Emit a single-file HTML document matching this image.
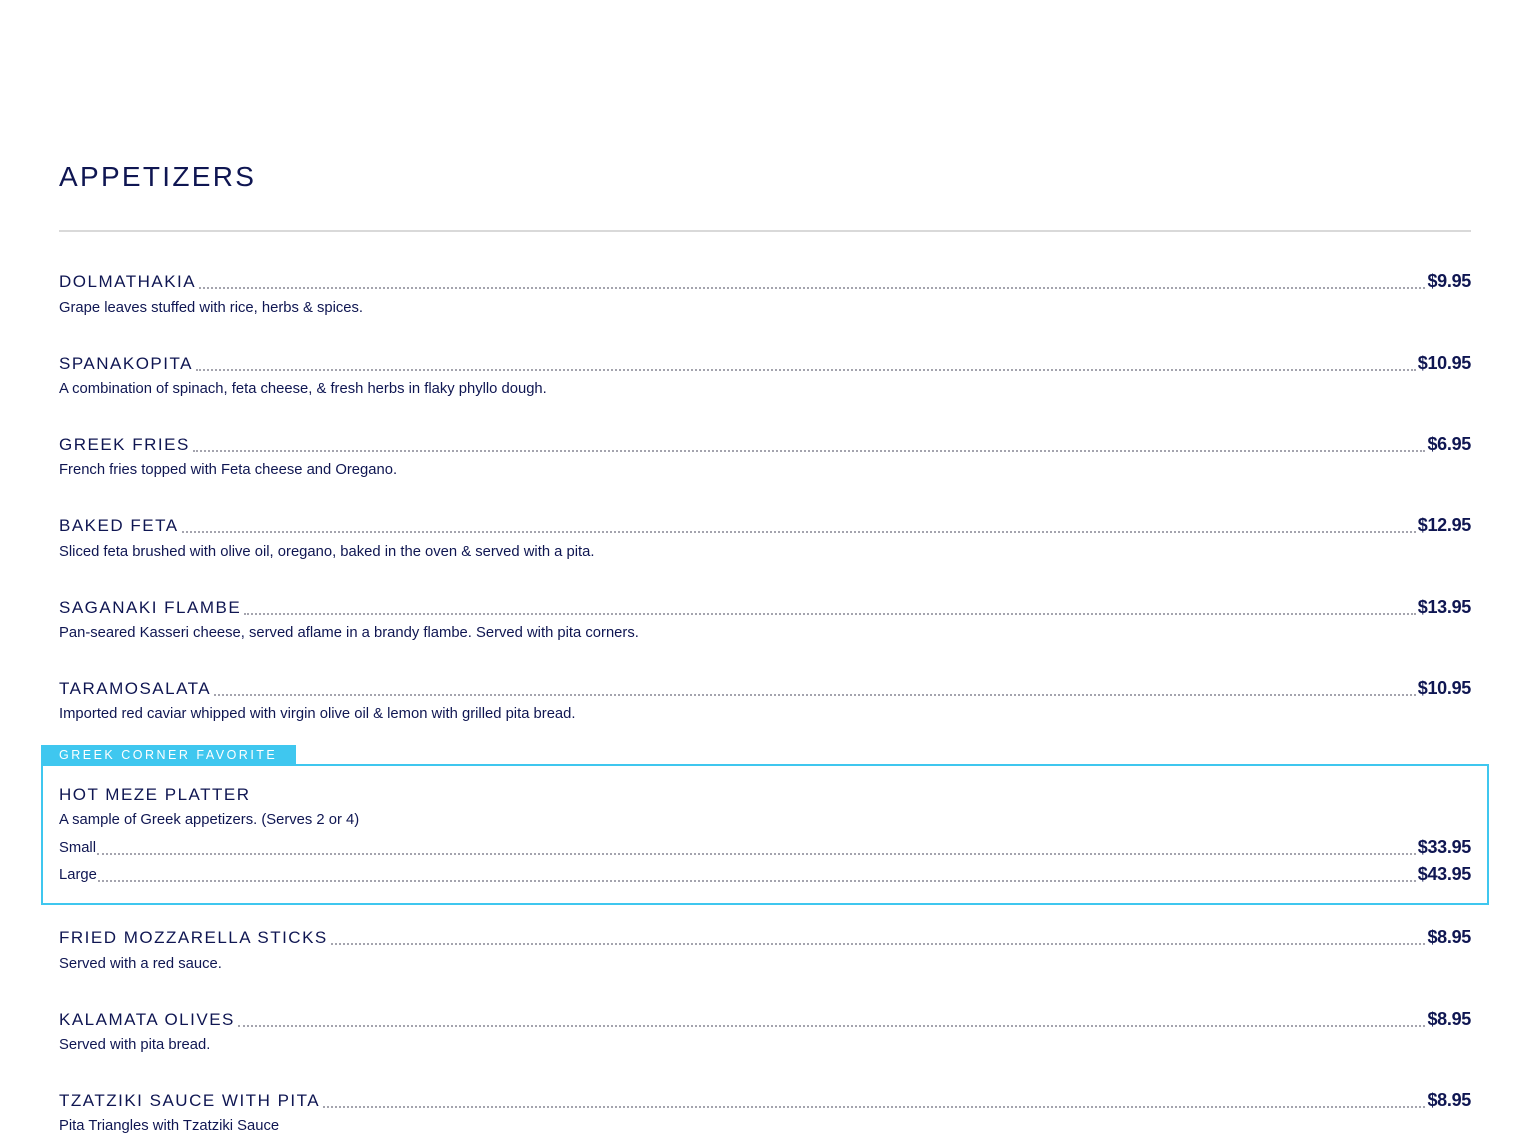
<!DOCTYPE html>
<html><head><meta charset="utf-8"><style>
*{margin:0;padding:0;box-sizing:border-box}
body{width:1530px;height:1133px;background:#fff;position:relative;overflow:hidden;font-family:"Liberation Sans",sans-serif;color:#0f1652}
h1{position:absolute;left:59px;top:157px;font-size:28px;font-weight:normal;letter-spacing:2.3px;line-height:40px}
.rule{position:absolute;left:59px;width:1412px;top:230px;height:2px;background:#d9d9d9}
.row{position:absolute;left:59px;width:1412px;height:24px;display:flex;align-items:flex-end;line-height:24px}
.t{font-size:17px;letter-spacing:1.5px;white-space:nowrap}
.s{font-size:14.8px;white-space:nowrap}
.d{flex:1;border-bottom:2px dotted #a4a4ae;margin:0 2px 5px 3px}
.p{font-size:18px;font-weight:bold;white-space:nowrap;letter-spacing:-0.3px;position:relative;top:-1px}
.desc{position:absolute;left:59px;font-size:14.8px;line-height:20px;white-space:nowrap}
.box{position:absolute;left:41px;top:764px;width:1448px;height:141px;border:2px solid #3fc7ef}
.lab{position:absolute;left:41px;top:745px;width:255px;height:20px;background:#3fc7ef;color:#fff;font-size:12.5px;letter-spacing:2.5px;line-height:20px;padding-left:18px;white-space:nowrap;overflow:hidden}
</style></head><body>
<h1>APPETIZERS</h1>
<div class="rule"></div>

<div class="row" style="top:270px"><span class="t">DOLMATHAKIA</span><span class="d"></span><span class="p">$9.95</span></div>
<div class="desc" style="top:298px">Grape leaves stuffed with rice, herbs &amp; spices.</div>

<div class="row" style="top:352px"><span class="t">SPANAKOPITA</span><span class="d"></span><span class="p">$10.95</span></div>
<div class="desc" style="top:379px">A combination of spinach, feta cheese, &amp; fresh herbs in flaky phyllo dough.</div>

<div class="row" style="top:433px"><span class="t">GREEK FRIES</span><span class="d"></span><span class="p">$6.95</span></div>
<div class="desc" style="top:460px">French fries topped with Feta cheese and Oregano.</div>

<div class="row" style="top:514px"><span class="t">BAKED FETA</span><span class="d"></span><span class="p">$12.95</span></div>
<div class="desc" style="top:542px">Sliced feta brushed with olive oil, oregano, baked in the oven &amp; served with a pita.</div>

<div class="row" style="top:596px"><span class="t">SAGANAKI FLAMBE</span><span class="d"></span><span class="p">$13.95</span></div>
<div class="desc" style="top:623px">Pan-seared Kasseri cheese, served aflame in a brandy flambe. Served with pita corners.</div>

<div class="row" style="top:677px"><span class="t">TARAMOSALATA</span><span class="d"></span><span class="p">$10.95</span></div>
<div class="desc" style="top:704px">Imported red caviar whipped with virgin olive oil &amp; lemon with grilled pita bread.</div>

<div class="box"></div>
<div class="lab">GREEK CORNER FAVORITE</div>
<div class="row" style="top:783px"><span class="t">HOT MEZE PLATTER</span></div>
<div class="desc" style="top:810px">A sample of Greek appetizers. (Serves 2 or 4)</div>
<div class="row" style="top:836px"><span class="s">Small</span><span class="d" style="margin-left:1px"></span><span class="p">$33.95</span></div>
<div class="row" style="top:863px"><span class="s">Large</span><span class="d" style="margin-left:1px"></span><span class="p">$43.95</span></div>

<div class="row" style="top:926px"><span class="t">FRIED MOZZARELLA STICKS</span><span class="d"></span><span class="p">$8.95</span></div>
<div class="desc" style="top:954px">Served with a red sauce.</div>

<div class="row" style="top:1008px"><span class="t">KALAMATA OLIVES</span><span class="d"></span><span class="p">$8.95</span></div>
<div class="desc" style="top:1035px">Served with pita bread.</div>

<div class="row" style="top:1089px"><span class="t">TZATZIKI SAUCE WITH PITA</span><span class="d"></span><span class="p">$8.95</span></div>
<div class="desc" style="top:1116px">Pita Triangles with Tzatziki Sauce</div>
</body></html>
